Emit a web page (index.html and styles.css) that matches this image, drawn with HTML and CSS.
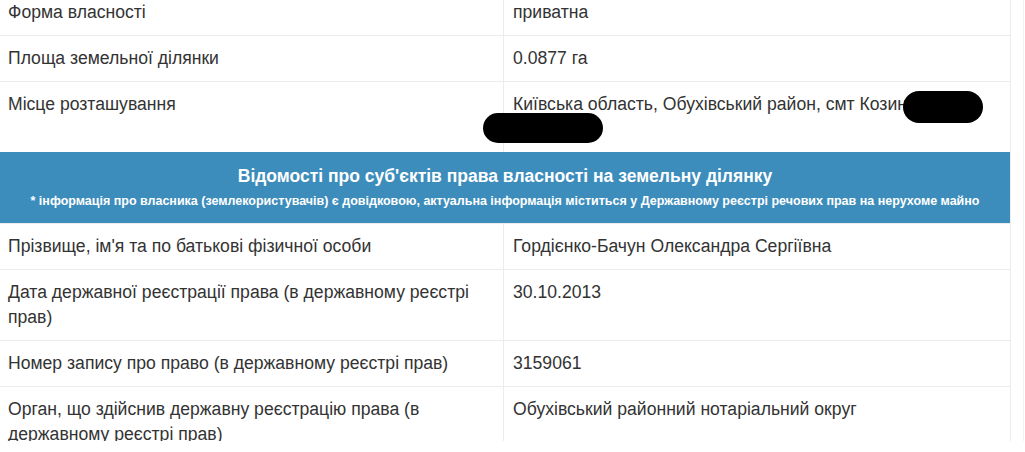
FILE: index.html
```html
<!DOCTYPE html>
<html lang="uk">
<head>
<meta charset="utf-8">
<title>Відомості</title>
<link rel="stylesheet" href="styles.css">
</head>
<body>
<div class="frame">
  <div class="table">
    <div class="row">
      <div class="cell">Форма власності</div>
      <div class="cell val">приватна</div>
    </div>
    <div class="row">
      <div class="cell">Площа земельної ділянки</div>
      <div class="cell val">0.0877 га</div>
    </div>
    <div class="row">
      <div class="cell">Місце розташування</div>
      <div class="cell val">Київська область, Обухівський район, смт Козин<span class="blob blob-a"></span><br><span class="blob blob-b"></span>&nbsp;</div>
    </div>
    <div class="section">
      <div class="section-title">Відомості про суб'єктів права власності на земельну ділянку</div>
      <div class="section-note">* інформація про власника (землекористувачів) є довідковою, актуальна інформація міститься у Державному реєстрі речових прав на нерухоме майно</div>
    </div>
    <div class="row">
      <div class="cell">Прізвище, ім'я та по батькові фізичної особи</div>
      <div class="cell val">Гордієнко-Бачун Олександра Сергіївна</div>
    </div>
    <div class="row">
      <div class="cell">Дата державної реєстрації права (в державному реєстрі прав)</div>
      <div class="cell val">30.10.2013</div>
    </div>
    <div class="row">
      <div class="cell">Номер запису про право (в державному реєстрі прав)</div>
      <div class="cell val">3159061</div>
    </div>
    <div class="row">
      <div class="cell">Орган, що здійснив державну реєстрацію права (в державному реєстрі прав)</div>
      <div class="cell val">Обухівський районний нотаріальний округ</div>
    </div>
  </div>
</div>
</body>
</html>
```
FILE: styles.css
```css
html, body {
  margin: 0;
  padding: 0;
  background: #ffffff;
  overflow: hidden;
}
body {
  font-family: "Liberation Sans", Arial, sans-serif;
  color: #333333;
  font-size: 17.6px;
}
.frame {
  width: 1023px;
  border-right: 1px solid #f2f2f2;
  height: 452px;
}
.table {
  width: 1010px;
  margin-top: -11px;
  border-right: 1px solid #ececec;
}
.row {
  display: grid;
  grid-template-columns: 503px 1fr;
  border-top: 1px solid #ececec;
}
.cell {
  padding: 10px 8px;
  line-height: 25px;
}
.val {
  position: relative;
  border-left: 1px solid #ececec;
  padding-left: 9px;
}
.blob {
  position: absolute;
  background: #000;
  border-radius: 16px;
}
.blob-a {
  left: 399px;
  top: 9px;
  width: 80px;
  height: 32px;
}
.blob-b {
  left: -21px;
  top: 31px;
  width: 120px;
  height: 30px;
}
.section {
  background: #3c8dbc;
  color: #ffffff;
  text-align: center;
  font-weight: bold;
  padding: 12px 8px 13px;
}
.section-title {
  font-size: 17.5px;
  line-height: 25px;
  margin-bottom: 3px;
}
.section-note {
  font-size: 12.5px;
  line-height: 18px;
}
```
